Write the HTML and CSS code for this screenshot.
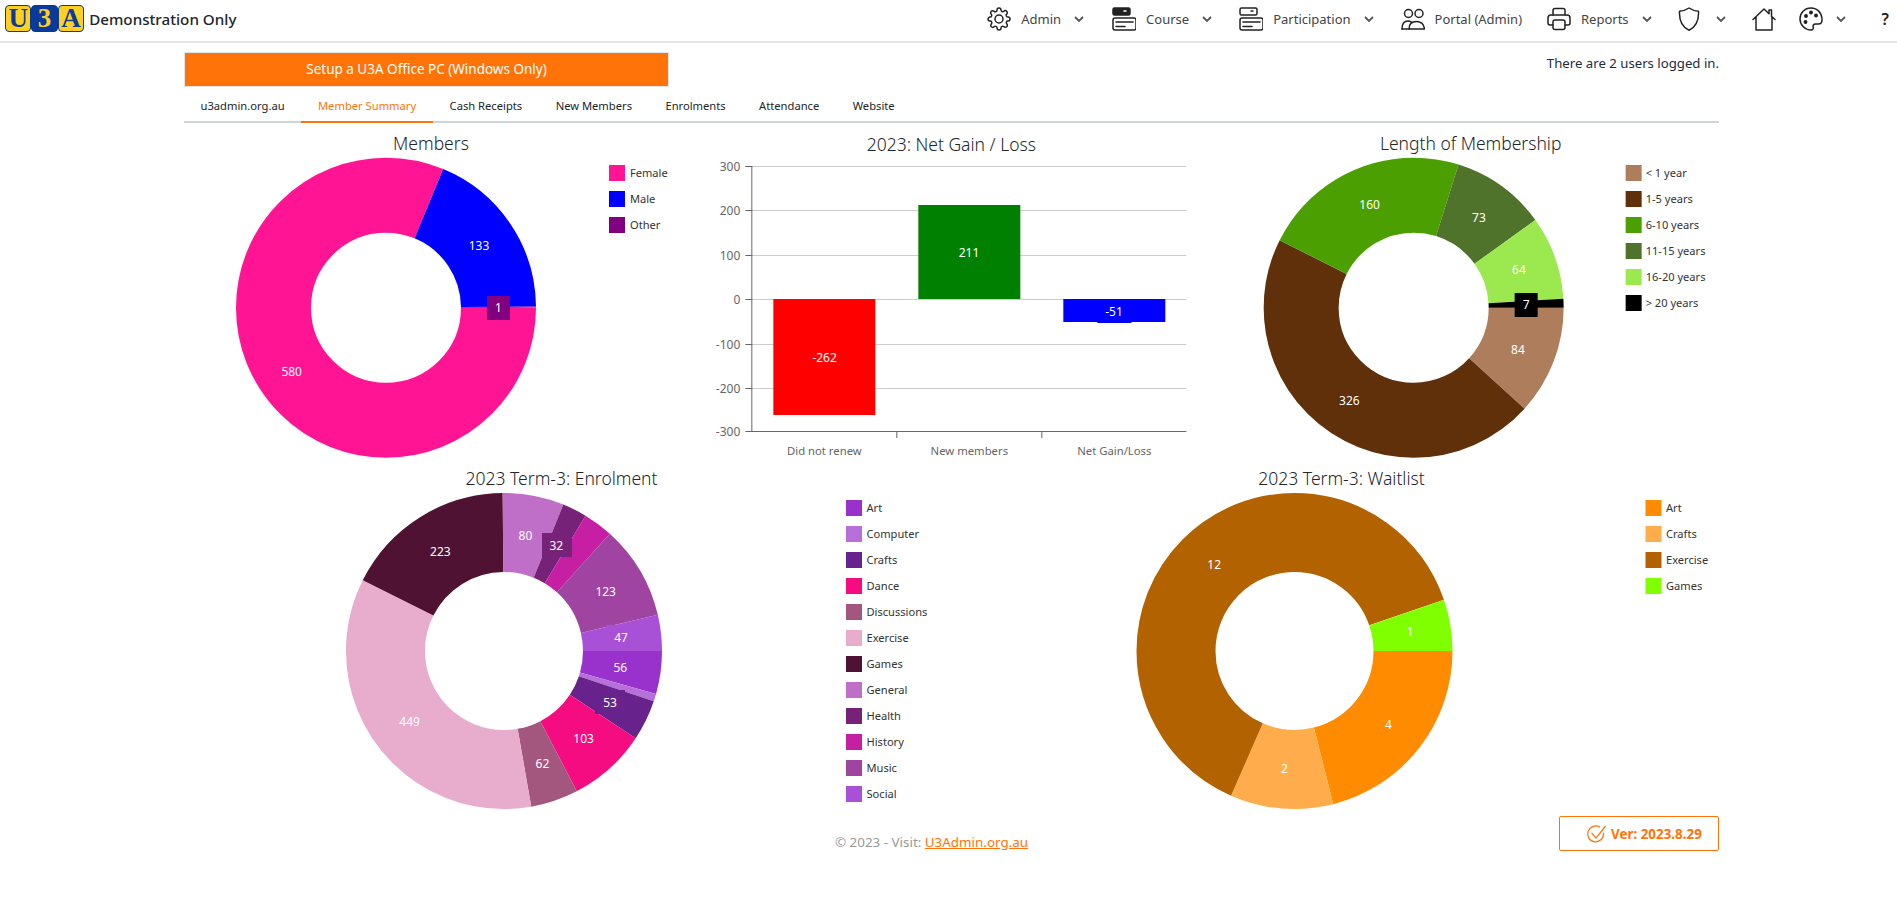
FILE: index.html
```html
<!DOCTYPE html>
<html lang="en">
<head>
  <meta charset="UTF-8" />
  <title>U3A Member Summary</title>
  <link rel="stylesheet" href="styles.css">
</head>
<body>
  <header class="topbar">
    <div class="brand">
      <div class="logo"><span class="tile">U</span><span class="tile tile-blue">3</span><span class="tile">A</span></div>
      <span class="brand-name">Demonstration Only</span>
    </div>
    <nav class="menu">
      <a class="menu-item">
        <svg class="icon" viewBox="0 0 24 24"><circle cx="12" cy="12" r="4"/><path d="M19.4 15a1.65 1.65 0 0 0 .33 1.82l.06.06a2 2 0 0 1 0 2.83 2 2 0 0 1-2.83 0l-.06-.06a1.65 1.65 0 0 0-1.82-.33 1.65 1.65 0 0 0-1 1.51V21a2 2 0 0 1-2 2 2 2 0 0 1-2-2v-.09A1.65 1.65 0 0 0 9 19.4a1.65 1.65 0 0 0-1.82.33l-.06.06a2 2 0 0 1-2.83 0 2 2 0 0 1 0-2.83l.06-.06a1.65 1.65 0 0 0 .33-1.82 1.65 1.65 0 0 0-1.51-1H3a2 2 0 0 1-2-2 2 2 0 0 1 2-2h.09A1.65 1.65 0 0 0 4.6 9a1.65 1.65 0 0 0-.33-1.82l-.06-.06a2 2 0 0 1 0-2.83 2 2 0 0 1 2.83 0l.06.06a1.65 1.65 0 0 0 1.82.33H9a1.65 1.65 0 0 0 1-1.51V3a2 2 0 0 1 2-2 2 2 0 0 1 2 2v.09a1.65 1.65 0 0 0 1 1.51 1.65 1.65 0 0 0 1.82-.33l.06-.06a2 2 0 0 1 2.83 0 2 2 0 0 1 0 2.83l-.06.06a1.65 1.65 0 0 0-.33 1.82V9a1.65 1.65 0 0 0 1.51 1H21a2 2 0 0 1 2 2 2 2 0 0 1-2 2h-.09a1.65 1.65 0 0 0-1.51 1z"/></svg>
        <span>Admin</span>
        <svg class="chevron" viewBox="0 0 10 6"><path d="M1 1l4 4 4-4"/></svg>
      </a>
      <a class="menu-item">
        <svg class="icon" viewBox="0 0 24 24"><rect class="solid" x="1" y="1" width="17" height="7" rx="1.5"/><path class="dot" d="M12 4h2"/><rect x="1" y="11" width="23" height="12" rx="2"/><path d="M4 15h17M4 19.500h9"/></svg>
        <span>Course</span>
        <svg class="chevron" viewBox="0 0 10 6"><path d="M1 1l4 4 4-4"/></svg>
      </a>
      <a class="menu-item item-part">
        <svg class="icon" viewBox="0 0 24 24"><rect x="1" y="1" width="17" height="7" rx="1.5"/><path d="M12 4h2"/><rect x="1" y="11" width="23" height="12" rx="2"/><path d="M4 15h17M4 19.500h9"/></svg>
        <span>Participation</span>
        <svg class="chevron" viewBox="0 0 10 6"><path d="M1 1l4 4 4-4"/></svg>
      </a>
      <a class="menu-item item-part">
        <svg class="icon" viewBox="0 0 24 24"><circle cx="7.500" cy="6.500" r="4"/><circle cx="18" cy="6.500" r="4"/><path d="M1 22c0-5 2-8 6-8 1.500 0 2.500.4 3.300 1M8 22c0-4.500 2.500-7.500 7.500-7.500S23 17.500 23.500 22z"/><path d="M1 22h7"/></svg>
        <span>Portal (Admin)</span>
      </a>
      <a class="menu-item item-reports">
        <svg class="icon" viewBox="0 0 24 24"><path d="M6 8V3.500A2 2 0 0 1 8 1.500h8a2 2 0 0 1 2 2V8"/><path d="M6 18H3a2 2 0 0 1-2-2v-5a3 3 0 0 1 3-3h16a3 3 0 0 1 3 3v5a2 2 0 0 1-2 2h-3"/><rect x="6" y="13" width="12" height="9.500" rx="2"/></svg>
        <span>Reports</span>
        <svg class="chevron" viewBox="0 0 10 6"><path d="M1 1l4 4 4-4"/></svg>
      </a>
      <a class="menu-item item-shield">
        <svg class="icon" viewBox="0 0 24 24"><path d="M12 1c3 2 6 3 9.500 3.200C22 14 19 20 12 23.300 5 20 2 14 2.500 4.200 6 4 9 3 12 1z"/></svg>
        <svg class="chevron" viewBox="0 0 10 6"><path d="M1 1l4 4 4-4"/></svg>
      </a>
      <a class="menu-item item-home">
        <svg class="icon" viewBox="0 0 24 24"><path d="M1 12.500L12 2l5 4.800V3h2.500v6.200L23 12.500M4 10v13h16V10"/></svg>
      </a>
      <a class="menu-item item-palette">
        <svg class="icon" viewBox="0 0 24 24"><path d="M12 1C5.500 1 1 6 1 12c0 6 5 11 11 11 1.800 0 2.500-1.200 2.200-2.500-.5-2 .3-3.500 2.300-3.500h3c2.200 0 3.500-1.700 3.500-4C23 6 18.500 1 12 1z"/><circle class="solid" cx="7" cy="9" r="1.200"/><circle class="solid" cx="12" cy="5.500" r="1.200"/><circle class="solid" cx="17" cy="8.500" r="1.200"/><circle class="solid" cx="6.500" cy="15" r="1.200"/></svg>
        <svg class="chevron" viewBox="0 0 10 6"><path d="M1 1l4 4 4-4"/></svg>
      </a>
      <a class="menu-item help">?</a>
    </nav>
  </header>

  <main class="page">
    <div class="page-top">
      <a class="setup-btn">Setup a U3A Office PC (Windows Only)</a>
      <span class="logged-in">There are 2 users logged in.</span>
    </div>

    <ul class="tabs">
      <li>u3admin.org.au</li>
      <li class="active">Member Summary</li>
      <li>Cash Receipts</li>
      <li>New Members</li>
      <li>Enrolments</li>
      <li>Attendance</li>
      <li>Website</li>
    </ul>

    <section class="charts-top">
      <svg class="chart" viewBox="184 128 495.67 336">
        <text class="chart-title" x="431" y="150.500">Members</text>
        <g class="donut">
          <circle cx="386" cy="307.700" r="112.500" stroke-width="75" pathLength="714" stroke="#ff1493" stroke-dasharray="580 9999"/>
          <circle cx="386" cy="307.700" r="112.500" stroke-width="75" pathLength="714" stroke="#0000ff" stroke-dasharray="133 9999" stroke-dashoffset="-580"/>
          <circle cx="386" cy="307.700" r="112.500" stroke-width="75" pathLength="714" stroke="#800080" stroke-dasharray="1 9999" stroke-dashoffset="-713"/>
        </g>
        <rect x="487" y="296" width="23" height="24" fill="#800080"/>
        <text class="slice-label" x="479" y="250">133</text>
        <text class="slice-label" x="291.700" y="376">580</text>
        <text class="slice-label" x="498.500" y="312.500">1</text>
        <rect x="609" y="165" width="16" height="16" fill="#ff1493"/><text class="legend" x="630" y="177">Female</text>
        <rect x="609" y="191" width="16" height="16" fill="#0000ff"/><text class="legend" x="630" y="203">Male</text>
        <rect x="609" y="217" width="16" height="16" fill="#800080"/><text class="legend" x="630" y="229">Other</text>
      </svg>

      <svg class="chart" viewBox="703.670 128 495.67 336">
        <text class="chart-title" x="951" y="150.500">2023: Net Gain / Loss</text>
        <path class="grid-line" d="M752 166.500H1186M752 210.500H1186M752 255.500H1186M752 299.500H1186M752 344.500H1186M752 388.500H1186"/>
        <path class="axis-line" d="M745 166.500H752M745 210.500H752M745 255.500H752M745 299.500H752M745 344.500H752M745 388.500H752M745 431.500H1186M751.500 166V432M896.500 432V438M1041.500 432V438"/>
        <rect x="773" y="299" width="102" height="116" fill="#ff0000"/>
        <rect x="918" y="205" width="102" height="94" fill="#008000"/>
        <rect x="1063" y="299" width="102" height="23" fill="#0000ff"/>
        <rect x="1097" y="311" width="34" height="12" fill="#0000ff"/>
        <text class="slice-label" x="824.300" y="361.500">-262</text>
        <text class="slice-label" x="968.700" y="256.500">211</text>
        <text class="slice-label" x="1113.700" y="316">-51</text>
        <text class="axis-label y-label" x="740" y="171">300</text>
        <text class="axis-label y-label" x="740" y="215">200</text>
        <text class="axis-label y-label" x="740" y="260">100</text>
        <text class="axis-label y-label" x="740" y="304">0</text>
        <text class="axis-label y-label" x="740" y="349">-100</text>
        <text class="axis-label y-label" x="740" y="393">-200</text>
        <text class="axis-label y-label" x="740" y="436">-300</text>
        <text class="axis-label x-label" x="824" y="455">Did not renew</text>
        <text class="axis-label x-label" x="969" y="455">New members</text>
        <text class="axis-label x-label" x="1114" y="455">Net Gain/Loss</text>
      </svg>

      <svg class="chart" viewBox="1223.330 128 495.67 336">
        <text class="chart-title" x="1471" y="150.500">Length of Membership</text>
        <g class="donut">
          <circle cx="1414" cy="307.700" r="112.500" stroke-width="75" pathLength="714" stroke="#ae7e5c" stroke-dasharray="84 9999"/>
          <circle cx="1414" cy="307.700" r="112.500" stroke-width="75" pathLength="714" stroke="#5f3009" stroke-dasharray="326 9999" stroke-dashoffset="-84"/>
          <circle cx="1414" cy="307.700" r="112.500" stroke-width="75" pathLength="714" stroke="#4c9f00" stroke-dasharray="160 9999" stroke-dashoffset="-410"/>
          <circle cx="1414" cy="307.700" r="112.500" stroke-width="75" pathLength="714" stroke="#50732c" stroke-dasharray="73 9999" stroke-dashoffset="-570"/>
          <circle cx="1414" cy="307.700" r="112.500" stroke-width="75" pathLength="714" stroke="#9ce84f" stroke-dasharray="64 9999" stroke-dashoffset="-643"/>
          <circle cx="1414" cy="307.700" r="112.500" stroke-width="75" pathLength="714" stroke="#000000" stroke-dasharray="7 9999" stroke-dashoffset="-707"/>
        </g>
        <rect x="1515" y="293" width="23" height="24" fill="#000000"/>
        <text class="slice-label" x="1518.300" y="354">84</text>
        <text class="slice-label" x="1349.700" y="405.500">326</text>
        <text class="slice-label" x="1370" y="209.500">160</text>
        <text class="slice-label" x="1479.300" y="222">73</text>
        <text class="slice-label" x="1519.300" y="274.500">64</text>
        <text class="slice-label" x="1526.500" y="309.500">7</text>
        <rect x="1626" y="165" width="16" height="16" fill="#ae7e5c"/><text class="legend" x="1646" y="177">&lt; 1 year</text>
        <rect x="1626" y="191" width="16" height="16" fill="#5f3009"/><text class="legend" x="1646" y="203">1-5 years</text>
        <rect x="1626" y="217" width="16" height="16" fill="#4c9f00"/><text class="legend" x="1646" y="229">6-10 years</text>
        <rect x="1626" y="243" width="16" height="16" fill="#50732c"/><text class="legend" x="1646" y="255">11-15 years</text>
        <rect x="1626" y="269" width="16" height="16" fill="#9ce84f"/><text class="legend" x="1646" y="281">16-20 years</text>
        <rect x="1626" y="295" width="16" height="16" fill="#000000"/><text class="legend" x="1646" y="307">&gt; 20 years</text>
      </svg>
    </section>

    <section class="charts-bottom">
      <svg class="chart" viewBox="184 464 755.500 350">
        <text class="chart-title" x="561.500" y="485">2023 Term-3: Enrolment</text>
        <g class="donut">
          <circle cx="504" cy="651" r="118.500" stroke-width="79" pathLength="1277" stroke="#9932cc" stroke-dasharray="56 9999"/>
          <circle cx="504" cy="651" r="118.500" stroke-width="79" pathLength="1277" stroke="#b76fd9" stroke-dasharray="10 9999" stroke-dashoffset="-56"/>
          <circle cx="504" cy="651" r="118.500" stroke-width="79" pathLength="1277" stroke="#68228b" stroke-dasharray="53 9999" stroke-dashoffset="-66"/>
          <circle cx="504" cy="651" r="118.500" stroke-width="79" pathLength="1277" stroke="#f50c80" stroke-dasharray="103 9999" stroke-dashoffset="-119"/>
          <circle cx="504" cy="651" r="118.500" stroke-width="79" pathLength="1277" stroke="#a3577e" stroke-dasharray="62 9999" stroke-dashoffset="-222"/>
          <circle cx="504" cy="651" r="118.500" stroke-width="79" pathLength="1277" stroke="#e8accc" stroke-dasharray="449 9999" stroke-dashoffset="-284"/>
          <circle cx="504" cy="651" r="118.500" stroke-width="79" pathLength="1277" stroke="#501232" stroke-dasharray="223 9999" stroke-dashoffset="-733"/>
          <circle cx="504" cy="651" r="118.500" stroke-width="79" pathLength="1277" stroke="#bf6fc7" stroke-dasharray="80 9999" stroke-dashoffset="-956"/>
          <circle cx="504" cy="651" r="118.500" stroke-width="79" pathLength="1277" stroke="#772279" stroke-dasharray="32 9999" stroke-dashoffset="-1036"/>
          <circle cx="504" cy="651" r="118.500" stroke-width="79" pathLength="1277" stroke="#c71fa4" stroke-dasharray="39 9999" stroke-dashoffset="-1068"/>
          <circle cx="504" cy="651" r="118.500" stroke-width="79" pathLength="1277" stroke="#9f44a0" stroke-dasharray="123 9999" stroke-dashoffset="-1107"/>
          <circle cx="504" cy="651" r="118.500" stroke-width="79" pathLength="1277" stroke="#a850d6" stroke-dasharray="47 9999" stroke-dashoffset="-1230"/>
        </g>
        <rect x="542" y="533" width="30" height="24" fill="#772279"/>
        <rect x="595" y="690" width="30" height="24" fill="#68228b"/>
        <rect x="606" y="625" width="30" height="12" fill="#a850d6"/>
        <text class="slice-label" x="620.300" y="671.500">56</text>
        <text class="slice-label" x="610" y="706.500">53</text>
        <text class="slice-label" x="583.600" y="742.500">103</text>
        <text class="slice-label" x="542.400" y="767.500">62</text>
        <text class="slice-label" x="409.600" y="726">449</text>
        <text class="slice-label" x="440.400" y="555.500">223</text>
        <text class="slice-label" x="525.400" y="539.500">80</text>
        <text class="slice-label" x="556.300" y="549.500">32</text>
        <text class="slice-label" x="605.700" y="595.500">123</text>
        <text class="slice-label" x="621.100" y="641.500">47</text>
        <rect x="846" y="500" width="16" height="16" fill="#9932cc"/><text class="legend" x="866.500" y="512">Art</text>
        <rect x="846" y="526" width="16" height="16" fill="#b76fd9"/><text class="legend" x="866.500" y="538">Computer</text>
        <rect x="846" y="552" width="16" height="16" fill="#68228b"/><text class="legend" x="866.500" y="564">Crafts</text>
        <rect x="846" y="578" width="16" height="16" fill="#f50c80"/><text class="legend" x="866.500" y="590">Dance</text>
        <rect x="846" y="604" width="16" height="16" fill="#a3577e"/><text class="legend" x="866.500" y="616">Discussions</text>
        <rect x="846" y="630" width="16" height="16" fill="#e8accc"/><text class="legend" x="866.500" y="642">Exercise</text>
        <rect x="846" y="656" width="16" height="16" fill="#501232"/><text class="legend" x="866.500" y="668">Games</text>
        <rect x="846" y="682" width="16" height="16" fill="#bf6fc7"/><text class="legend" x="866.500" y="694">General</text>
        <rect x="846" y="708" width="16" height="16" fill="#772279"/><text class="legend" x="866.500" y="720">Health</text>
        <rect x="846" y="734" width="16" height="16" fill="#c71fa4"/><text class="legend" x="866.500" y="746">History</text>
        <rect x="846" y="760" width="16" height="16" fill="#9f44a0"/><text class="legend" x="866.500" y="772">Music</text>
        <rect x="846" y="786" width="16" height="16" fill="#a850d6"/><text class="legend" x="866.500" y="798">Social</text>
      </svg>

      <svg class="chart" viewBox="963.500 464 755.500 350">
        <text class="chart-title" x="1341" y="485">2023 Term-3: Waitlist</text>
        <g class="donut">
          <circle cx="1294" cy="651" r="118.500" stroke-width="79" pathLength="19" stroke="#ff8c00" stroke-dasharray="4 9999"/>
          <circle cx="1294" cy="651" r="118.500" stroke-width="79" pathLength="19" stroke="#ffad4c" stroke-dasharray="2 9999" stroke-dashoffset="-4"/>
          <circle cx="1294" cy="651" r="118.500" stroke-width="79" pathLength="19" stroke="#b36200" stroke-dasharray="12 9999" stroke-dashoffset="-6"/>
          <circle cx="1294" cy="651" r="118.500" stroke-width="79" pathLength="19" stroke="#7fff00" stroke-dasharray="1 9999" stroke-dashoffset="-18"/>
        </g>
        <text class="slice-label" x="1388" y="728.500">4</text>
        <text class="slice-label" x="1284" y="773">2</text>
        <text class="slice-label" x="1213.700" y="568.500">12</text>
        <text class="slice-label" x="1409.800" y="635.500">1</text>
        <rect x="1645" y="500" width="16" height="16" fill="#ff8c00"/><text class="legend" x="1665.500" y="512">Art</text>
        <rect x="1645" y="526" width="16" height="16" fill="#ffad4c"/><text class="legend" x="1665.500" y="538">Crafts</text>
        <rect x="1645" y="552" width="16" height="16" fill="#b36200"/><text class="legend" x="1665.500" y="564">Exercise</text>
        <rect x="1645" y="578" width="16" height="16" fill="#7fff00"/><text class="legend" x="1665.500" y="590">Games</text>
      </svg>
    </section>

    <footer class="page-foot">
      <p class="copyright">© 2023 - Visit: <a class="foot-link">U3Admin.org.au</a></p>
      <a class="version">
        <svg class="version-icon" viewBox="0 0 24 24"><path d="M21 11a9.500 9.500 0 1 1-5-7.500"/><path d="M7 11l5 6L23 3"/></svg>
        Ver: 2023.8.29
      </a>
    </footer>
  </main>
</body>
</html>
```

FILE: styles.css
```css
body {
  margin: 0;
  background: #fff;
  color: #212529;
  font-family: "Noto Sans", "Open Sans", sans-serif;
  font-size: 13px;
}
a { color: inherit; }

.topbar {
  display: flex;
  justify-content: space-between;
  align-items: center;
  height: 41px;
  border-bottom: 2px solid #e2e4e7;
}
.brand {
  display: flex;
  align-items: center;
  padding-left: 5px;
  margin-bottom: 4px;
}
.logo {
  display: flex;
  height: 27px;
  margin-right: 5px;
}
.tile {
  box-sizing: border-box;
  width: 26.4px;
  height: 27px;
  border: 1px solid #0a3a8c;
  border-radius: 4px;
  background: #ffd020;
  color: #0a3a9c;
  font-family: "Liberation Serif", serif;
  font-size: 27px;
  font-weight: 700;
  line-height: 25px;
  text-align: center;
}
.tile-blue {
  background: #0a3a9c;
  color: #ffd020;
}
.brand-name {
  font-size: 15.2px;
  font-weight: 500;
}

.menu {
  display: flex;
  align-items: center;
  padding-right: 8px;
  margin-bottom: 3px;
}
.menu-item {
  display: flex;
  align-items: center;
  gap: 10px;
  margin-left: 28px;
  color: #444;
}
.item-part { margin-left: 27px; }
.item-reports { margin-left: 25px; }
.item-shield { margin-left: 25px; gap: 12px; }
.item-home { margin-left: 26.500px; }
.item-palette { margin-left: 23px; }
.icon {
  width: 24px;
  height: 24px;
  fill: none;
  stroke: #222;
  stroke-width: 1.5;
  stroke-linecap: round;
  stroke-linejoin: round;
}
.icon .solid { fill: #222; }
.icon .dot { stroke: #fff; }
.chevron {
  width: 10px;
  height: 6px;
  margin-left: 3px;
  fill: none;
  stroke: #555;
  stroke-width: 1.8;
}
.help {
  margin-left: 35.500px;
  font-size: 16px;
  font-weight: 600;
  color: #222;
}

.page {
  width: 1535px;
  margin-left: 184px;
}
.page-top {
  display: flex;
  justify-content: space-between;
  padding-top: 9px;
}
.setup-btn {
  width: 483px;
  height: 33px;
  border: 1px solid #e2e4e7;
  background: #ff7308;
  color: #fff;
  font-size: 13.5px;
  line-height: 33px;
  text-align: center;
}
.logged-in {
  padding-top: 2px;
  font-size: 13.2px;
  color: #1c2c44;
}

.tabs {
  display: flex;
  height: 34px;
  margin: 0;
  padding: 0;
  border-bottom: 2px solid #ced4da;
  list-style: none;
}
.tabs li {
  padding: 0 16.900px 0 16.500px;
  margin-bottom: -2px;
  font-size: 11.2px;
  line-height: 38px;
}
.tabs .active {
  color: #ff7308;
  border-bottom: 2px solid #ff7308;
}

.charts-top {
  display: grid;
  grid-template-columns: repeat(3, 1fr);
  column-gap: 24px;
  margin-top: 5px;
}
.charts-bottom {
  display: grid;
  grid-template-columns: repeat(2, 1fr);
  column-gap: 24px;
}
.chart {
  display: block;
  width: 100%;
}
.donut circle { fill: none; }
.chart-title {
  font-size: 17.500px;
  font-weight: 300;
  fill: #212529;
  text-anchor: middle;
}
.slice-label {
  font-size: 12px;
  fill: #fff;
  text-anchor: middle;
}
.legend {
  font-size: 11.1px;
  fill: #333;
}
.grid-line {
  fill: none;
  stroke: #ccc;
}
.axis-line {
  fill: none;
  stroke: #666;
}
.axis-label {
  font-size: 12px;
  fill: #666;
  text-anchor: middle;
}
.x-label { font-size: 11.3px; }
.y-label { text-anchor: end; }

.page-foot {
  display: flex;
  justify-content: space-between;
  align-items: flex-end;
  margin-top: 2px;
}
.copyright {
  margin: 0 0 0 651px;
  font-size: 13.4px;
  color: #999;
}
.foot-link {
  color: #ff7308;
  text-decoration: underline;
}
.version {
  display: flex;
  align-items: center;
  gap: 5px;
  width: 132px;
  height: 33px;
  padding-left: 26px;
  border: 1px solid #ff7308;
  border-radius: 2px;
  color: #ff7308;
  font-size: 13.4px;
  font-weight: 700;
}
.version-icon {
  width: 20px;
  height: 20px;
  fill: none;
  stroke: #ff7308;
  stroke-width: 1.5;
  stroke-linecap: round;
  stroke-linejoin: round;
}
```
